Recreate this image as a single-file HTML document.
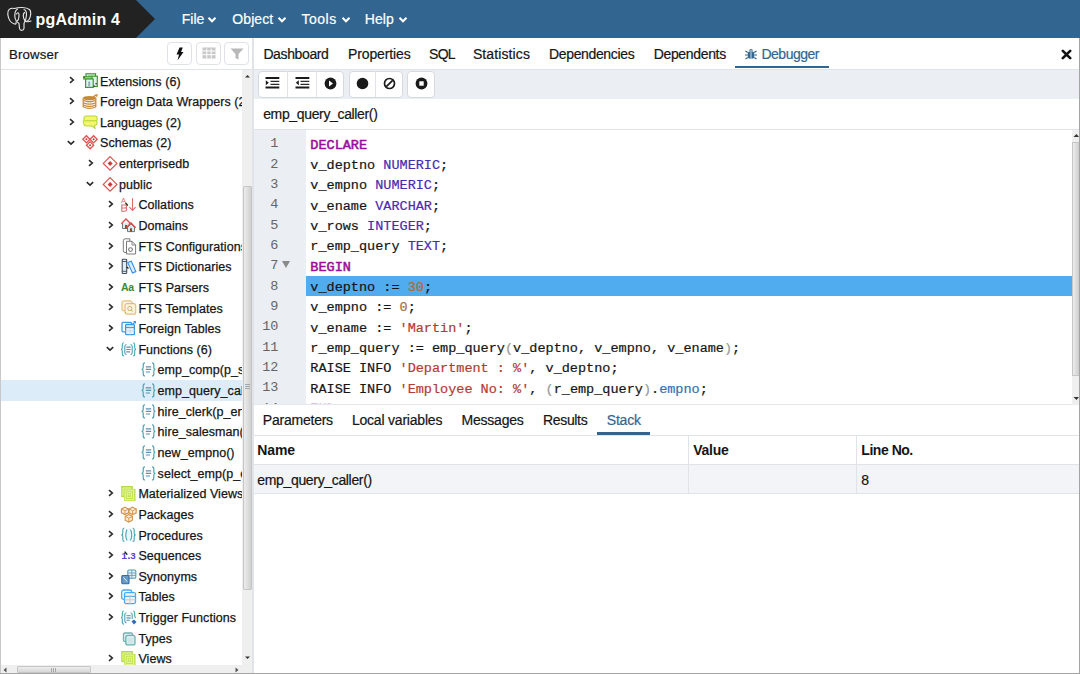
<!DOCTYPE html>
<html><head><meta charset="utf-8">
<style>
*{box-sizing:border-box;margin:0;padding:0}
html,body{width:1080px;height:674px;overflow:hidden;background:#fff;font-family:"Liberation Sans",sans-serif;color:#222;position:relative}
.a{position:absolute;white-space:nowrap}
.t{line-height:normal;-webkit-text-stroke:0.2px currentColor}
.tree{font-size:12.5px;letter-spacing:0.05px;color:#151515;line-height:normal;-webkit-text-stroke:0.25px #151515}
.code{font-family:"Liberation Mono",monospace;font-size:13.52px;color:#151515;line-height:normal;-webkit-text-stroke:0.2px currentColor}
.ln{font-family:"Liberation Mono",monospace;font-size:13.52px;color:#666;text-align:right;width:31px;line-height:normal}
.kw{color:#990f99;-webkit-text-stroke:0.55px #990f99}
.ty{color:#4a2bb0}
.nu{color:#a86c38}
.st{color:#b43a36}
.pa{color:#9a9a9a}
.pr{color:#2f72b8}
.ico{width:15px;height:15px}
</style></head><body>
<!-- navbar -->
<div class="a" style="left:0;top:0;width:1080px;height:38px;background:#326690"></div>
<svg class="a" style="left:0;top:0" width="160" height="38"><polygon points="0,0 136,0 155,19 136,38 0,38" fill="#222"/></svg>

<!-- browser panel -->
<div class="a" style="left:0;top:38px;width:1px;height:636px;background:#c8c8c8"></div>
<div class="a" style="left:1px;top:69px;width:251px;height:1px;background:#e0e3e8"></div>
<div class="a" style="left:167px;top:42.3px;width:25px;height:22.5px;border:1px solid #dfe2e7;border-radius:4px"></div>
<div class="a" style="left:196px;top:42.3px;width:25px;height:22.5px;border:1px solid #dfe2e7;border-radius:4px"></div>
<div class="a" style="left:224px;top:42.3px;width:25px;height:22.5px;border:1px solid #dfe2e7;border-radius:4px"></div>
<!-- selected row -->
<div class="a" style="left:1px;top:380px;width:241px;height:20.7px;background:#dcedf9"></div>
<div class="a" style="left:0;top:70px;width:242px;height:595px;overflow:hidden"><div class="a" style="left:0;top:-70px;width:1080px;height:674px"><svg class="a" style="left:68.0px;top:76.4px" width="8" height="8" viewBox="0 0 8 8"><path d="M2 1.2 L5.3 4 L2 6.8" fill="none" stroke="#2a2a2a" stroke-width="1.6"/></svg>
<svg class="a" style="left:83.0px;top:73.4px;overflow:visible" width="17" height="17" viewBox="0 0 17 17"><g stroke="#3d9a2e" stroke-width="1.2" fill="#def4f4">
<rect x="3" y="0.8" width="9.5" height="3.2"/>
<rect x="5.8" y="3.2" width="8.5" height="10.3"/>
<rect x="0.8" y="3.8" width="8.2" height="2.2"/>
<rect x="2.6" y="6" width="7.6" height="8.4"/></g>
<rect x="5.2" y="8.5" width="2" height="5" fill="#9ab"/>
<rect x="0.5" y="3.5" width="1.3" height="1.3" fill="#333"/><rect x="10.5" y="12.5" width="1.3" height="1.3" fill="#333"/><rect x="12.5" y="10" width="1.3" height="1.3" fill="#333"/></svg>
<div class="a tree" style="left:100.0px;top:74.59px">Extensions (6)</div>
<svg class="a" style="left:68.0px;top:97.0px" width="8" height="8" viewBox="0 0 8 8"><path d="M2 1.2 L5.3 4 L2 6.8" fill="none" stroke="#2a2a2a" stroke-width="1.6"/></svg>
<svg class="a" style="left:83.0px;top:94.0px;overflow:visible" width="17" height="17" viewBox="0 0 17 17"><ellipse cx="6.5" cy="4.1" rx="6.6" ry="2.2" fill="#c8893a"/>
<g fill="none" stroke="#c8893a" stroke-width="1.25">
<path d="M0.2 6.3 Q6.5 9.2 12.8 6.3"/><path d="M0.2 8.7 Q6.5 11.6 12.8 8.7"/><path d="M0.2 11 Q6.5 13.9 12.8 11"/><path d="M0.2 13 Q6.5 15.6 12.8 13"/>
<path d="M0.2 4 L0.2 13 M12.8 4 L12.8 13"/></g>
<path d="M11.5 1 L15 0 L14 3.2Z" fill="#c8893a"/><path d="M10 3 L13 1" stroke="#c8893a" stroke-width="1.3"/></svg>
<div class="a tree" style="left:100.0px;top:95.22px">Foreign Data Wrappers (2)</div>
<svg class="a" style="left:68.0px;top:117.7px" width="8" height="8" viewBox="0 0 8 8"><path d="M2 1.2 L5.3 4 L2 6.8" fill="none" stroke="#2a2a2a" stroke-width="1.6"/></svg>
<svg class="a" style="left:83.0px;top:114.7px;overflow:visible" width="17" height="17" viewBox="0 0 17 17"><path d="M1 3 Q1 1 3.5 1 L12 1 Q14.5 1 14 3.5 Q15 5.5 13.5 6.5 Q15 8.5 13 10 L11.5 10.5 L12 13.5 L9 11 L3.5 11 Q0.5 11 1 8.5 Q-0.5 6.5 1 5.5 Z" fill="#f6f66e" stroke="#b6d63a" stroke-width="1.1"/>
<path d="M1.5 5.8 L13.5 5.8" stroke="#b6d63a" stroke-width="1.1"/></svg>
<div class="a tree" style="left:100.0px;top:115.86px">Languages (2)</div>
<svg class="a" style="left:66.4px;top:138.8px" width="10" height="8" viewBox="0 0 10 8"><path d="M1.8 2.2 L5 5.2 L8.2 2.2" fill="none" stroke="#2a2a2a" stroke-width="1.6"/></svg>
<svg class="a" style="left:83.0px;top:135.3px;overflow:visible" width="17" height="17" viewBox="0 0 17 17"><g fill="none" stroke="#d9534f" stroke-width="1.3">
<path d="M3.4 0.7 L7 4.3 L3.4 7.9 L-0.2 4.3Z"/><path d="M10.6 0.7 L14.2 4.3 L10.6 7.9 L7 4.3Z"/><path d="M7.1 6.6 L10.7 10.2 L7.1 13.8 L3.5 10.2Z"/></g>
<circle cx="3.4" cy="4.3" r="1" fill="#d43030"/><circle cx="10.6" cy="4.3" r="1" fill="#d43030"/><circle cx="7.1" cy="10.2" r="1" fill="#d43030"/></svg>
<div class="a tree" style="left:100.0px;top:136.49px">Schemas (2)</div>
<svg class="a" style="left:87.0px;top:158.9px" width="8" height="8" viewBox="0 0 8 8"><path d="M2 1.2 L5.3 4 L2 6.8" fill="none" stroke="#2a2a2a" stroke-width="1.6"/></svg>
<svg class="a" style="left:102.5px;top:155.9px;overflow:visible" width="17" height="17" viewBox="0 0 17 17"><path d="M7.1 0.6 L13.9 7.4 L7.1 14.2 L0.3 7.4Z" fill="none" stroke="#d9534f" stroke-width="1.2"/>
<path d="M7.1 4.9 L9.6 7.4 L7.1 9.9 L4.6 7.4Z" fill="#d43838"/></svg>
<div class="a tree" style="left:119.1px;top:157.13px">enterprisedb</div>
<svg class="a" style="left:85.4px;top:180.1px" width="10" height="8" viewBox="0 0 10 8"><path d="M1.8 2.2 L5 5.2 L8.2 2.2" fill="none" stroke="#2a2a2a" stroke-width="1.6"/></svg>
<svg class="a" style="left:102.5px;top:176.6px;overflow:visible" width="17" height="17" viewBox="0 0 17 17"><path d="M7.1 0.6 L13.9 7.4 L7.1 14.2 L0.3 7.4Z" fill="none" stroke="#d9534f" stroke-width="1.2"/>
<path d="M7.1 4.9 L9.6 7.4 L7.1 9.9 L4.6 7.4Z" fill="#d43838"/></svg>
<div class="a tree" style="left:119.1px;top:177.76px">public</div>
<svg class="a" style="left:106.7px;top:200.2px" width="8" height="8" viewBox="0 0 8 8"><path d="M2 1.2 L5.3 4 L2 6.8" fill="none" stroke="#2a2a2a" stroke-width="1.6"/></svg>
<svg class="a" style="left:121.0px;top:197.2px;overflow:visible" width="17" height="17" viewBox="0 0 17 17"><text x="0" y="6.3" font-family="Liberation Sans" font-size="7.5" fill="#e06a6a">A</text>
<path d="M0.8 8 L4.2 8 Q5.6 8 5.6 9.5 Q5.6 10.8 4.3 10.9 Q5.8 11 5.8 12.6 Q5.8 14.2 4 14.2 L0.8 14.2Z M0.8 11 L4.2 11" fill="none" stroke="#e06a6a" stroke-width="1.1"/>
<path d="M11.5 1.3 L11.5 13.3 M8.4 10.2 L11.5 13.5 L14.6 10.2" stroke="#e06a6a" stroke-width="1.1" fill="none"/>
<path d="M4.5 6 L6.8 8.5" stroke="#222" stroke-width="1.3"/></svg>
<div class="a tree" style="left:138.4px;top:198.40px">Collations</div>
<svg class="a" style="left:106.7px;top:220.8px" width="8" height="8" viewBox="0 0 8 8"><path d="M2 1.2 L5.3 4 L2 6.8" fill="none" stroke="#2a2a2a" stroke-width="1.6"/></svg>
<svg class="a" style="left:121.0px;top:217.8px;overflow:visible" width="17" height="17" viewBox="0 0 17 17"><path d="M1.5 5.2 L1.5 10.5 L8.5 10.5 L8.5 5.2" fill="#d4ecf8" stroke="#666" stroke-width="0.9"/>
<path d="M0.3 5.8 L5 1 L9.7 5.8" fill="none" stroke="#e04848" stroke-width="1.3"/>
<rect x="4" y="7" width="2" height="3.5" fill="#8a4a1a"/>
<path d="M6.5 9.2 L6.5 13.6 L13.5 13.6 L13.5 9.2 L10 5.8Z" fill="#d4ecf8" stroke="#666" stroke-width="0.9"/>
<path d="M5.3 9.8 L10 5 L14.7 9.8" fill="none" stroke="#e04848" stroke-width="1.3"/>
<rect x="9" y="10.3" width="2" height="3.3" fill="#8a4a1a"/></svg>
<div class="a tree" style="left:138.4px;top:219.03px">Domains</div>
<svg class="a" style="left:106.7px;top:241.5px" width="8" height="8" viewBox="0 0 8 8"><path d="M2 1.2 L5.3 4 L2 6.8" fill="none" stroke="#2a2a2a" stroke-width="1.6"/></svg>
<svg class="a" style="left:121.0px;top:238.5px;overflow:visible" width="17" height="17" viewBox="0 0 17 17"><path d="M4 -0.2 L8.8 -0.2 L8.8 13.5 L4 13.5 Q2.3 13.5 2.3 11.5 L2.3 1.8 Q2.3 -0.2 4 -0.2Z" fill="#fff" stroke="#7a7a7a" stroke-width="1"/>
<path d="M5.5 2.3 L11 2.3 L14.6 6 L14.6 15 L5.5 15Z" fill="#fff" stroke="#7a7a7a" stroke-width="1"/>
<path d="M11 2.3 L11 6 L14.6 6" fill="none" stroke="#7a7a7a" stroke-width="0.9"/>
<circle cx="9.5" cy="10.6" r="1.9" fill="none" stroke="#7a7a7a" stroke-width="1.1"/></svg>
<div class="a tree" style="left:138.4px;top:239.67px">FTS Configurations</div>
<svg class="a" style="left:106.7px;top:262.1px" width="8" height="8" viewBox="0 0 8 8"><path d="M2 1.2 L5.3 4 L2 6.8" fill="none" stroke="#2a2a2a" stroke-width="1.6"/></svg>
<svg class="a" style="left:121.0px;top:259.1px;overflow:visible" width="17" height="17" viewBox="0 0 17 17"><rect x="1.2" y="0.3" width="4.5" height="14.2" rx="0.8" fill="#dcecf8" stroke="#444c5c" stroke-width="1.1"/>
<path d="M1.2 2.5 L5.7 2.5 M1.2 12.3 L5.7 12.3" stroke="#444c5c" stroke-width="0.9"/>
<path d="M6.8 3.6 L10.3 2.2 L14.9 12.6 L11.4 14Z" fill="#d8ecfb" stroke="#3a8ee8" stroke-width="1.1"/>
<path d="M5.8 8 L7.5 9.5" stroke="#222" stroke-width="1.2"/></svg>
<div class="a tree" style="left:138.4px;top:260.30px">FTS Dictionaries</div>
<svg class="a" style="left:106.7px;top:282.8px" width="8" height="8" viewBox="0 0 8 8"><path d="M2 1.2 L5.3 4 L2 6.8" fill="none" stroke="#2a2a2a" stroke-width="1.6"/></svg>
<svg class="a" style="left:121.0px;top:279.8px;overflow:visible" width="17" height="17" viewBox="0 0 17 17"><text x="0" y="10.9" font-family="Liberation Sans" font-size="10.5" font-weight="bold" fill="#3e8a2c" letter-spacing="-0.3">Aa</text></svg>
<div class="a tree" style="left:138.4px;top:280.94px">FTS Parsers</div>
<svg class="a" style="left:106.7px;top:303.4px" width="8" height="8" viewBox="0 0 8 8"><path d="M2 1.2 L5.3 4 L2 6.8" fill="none" stroke="#2a2a2a" stroke-width="1.6"/></svg>
<svg class="a" style="left:121.0px;top:300.4px;overflow:visible" width="17" height="17" viewBox="0 0 17 17"><rect x="1" y="0.8" width="10" height="10" rx="2" fill="#fdf3e0" stroke="#e8bf7e" stroke-width="1.2"/>
<rect x="4" y="3.7" width="10.7" height="10.5" rx="2" fill="#fdf3e0" stroke="#e8bf7e" stroke-width="1.2"/>
<circle cx="8.8" cy="8.5" r="2.1" fill="none" stroke="#d8b070" stroke-width="1"/><path d="M10.3 10 L11.6 11.4" stroke="#8cc83a" stroke-width="1"/>
<circle cx="11.8" cy="3.5" r="0.6" fill="#8cc83a"/><circle cx="4.5" cy="12.5" r="0.6" fill="#8cc83a"/></svg>
<div class="a tree" style="left:138.4px;top:301.57px">FTS Templates</div>
<svg class="a" style="left:106.7px;top:324.0px" width="8" height="8" viewBox="0 0 8 8"><path d="M2 1.2 L5.3 4 L2 6.8" fill="none" stroke="#2a2a2a" stroke-width="1.6"/></svg>
<svg class="a" style="left:121.0px;top:321.0px;overflow:visible" width="17" height="17" viewBox="0 0 17 17"><rect x="1" y="1.3" width="9.5" height="9.5" rx="1" fill="#fff" stroke="#3a9ae8" stroke-width="1.3"/>
<rect x="4.6" y="3.5" width="8.8" height="10.2" rx="1" fill="#eef2f6" stroke="#3a9ae8" stroke-width="1.3"/>
<path d="M4.6 6.5 L13.4 6.5" stroke="#3a9ae8" stroke-width="1.2"/><path d="M4.6 10 L13.4 10 M9 6.5 L9 13.7" stroke="#c8d4de" stroke-width="0.9"/>
<path d="M11.5 3.5 L14.3 0.8" stroke="#3a9ae8" stroke-width="1.2"/><path d="M12 0 L15 0 L15 3Z" fill="#3a9ae8"/></svg>
<div class="a tree" style="left:138.4px;top:322.21px">Foreign Tables</div>
<svg class="a" style="left:105.1px;top:345.2px" width="10" height="8" viewBox="0 0 10 8"><path d="M1.8 2.2 L5 5.2 L8.2 2.2" fill="none" stroke="#2a2a2a" stroke-width="1.6"/></svg>
<svg class="a" style="left:121.0px;top:341.7px;overflow:visible" width="17" height="17" viewBox="0 0 17 17"><g fill="none" stroke="#4aa4b4" stroke-width="1.1">
<path d="M3 0.8 Q1.3 0.8 1.3 2.8 L1.3 5.5 Q1.3 7.4 0 7.4 Q1.3 7.4 1.3 9.3 L1.3 12 Q1.3 14 3 14"/>
<path d="M12 0.8 Q13.7 0.8 13.7 2.8 L13.7 5.5 Q13.7 7.4 15 7.4 Q13.7 7.4 13.7 9.3 L13.7 12 Q13.7 14 12 14"/>
<path d="M5.5 2.5 Q3.8 2.5 3.8 4.5 L3.8 10.5 Q3.8 12.5 5.5 12.5 M9.5 2.5 Q11.2 2.5 11.2 4.5 L11.2 10.5 Q11.2 12.5 9.5 12.5"/></g>
<path d="M5.3 5.2 L9.7 5.2 M5.3 7.5 L9.7 7.5 M5.3 9.9 L9 9.9" stroke="#5e8fae" stroke-width="1.2"/></svg>
<div class="a tree" style="left:138.4px;top:342.84px">Functions (6)</div>
<svg class="a" style="left:141.0px;top:362.3px;overflow:visible" width="17" height="17" viewBox="0 0 17 17"><g fill="none" stroke="#4aa4b4" stroke-width="1.2">
<path d="M4 0.8 Q2.2 0.8 2.2 2.8 L2.2 5.5 Q2.2 7.4 0.6 7.4 Q2.2 7.4 2.2 9.3 L2.2 12 Q2.2 14 4 14"/>
<path d="M11 0.8 Q12.8 0.8 12.8 2.8 L12.8 5.5 Q12.8 7.4 14.4 7.4 Q12.8 7.4 12.8 9.3 L12.8 12 Q12.8 14 11 14"/></g>
<path d="M4.8 4.8 L10.2 4.8 M4.8 7.4 L10.2 7.4 M4.8 10 L9 10" stroke="#5e8fae" stroke-width="1.2"/></svg>
<div class="a tree" style="left:157.6px;top:363.48px">emp_comp(p_sal NUMERIC)</div>
<svg class="a" style="left:141.0px;top:382.9px;overflow:visible" width="17" height="17" viewBox="0 0 17 17"><g fill="none" stroke="#4aa4b4" stroke-width="1.2">
<path d="M4 0.8 Q2.2 0.8 2.2 2.8 L2.2 5.5 Q2.2 7.4 0.6 7.4 Q2.2 7.4 2.2 9.3 L2.2 12 Q2.2 14 4 14"/>
<path d="M11 0.8 Q12.8 0.8 12.8 2.8 L12.8 5.5 Q12.8 7.4 14.4 7.4 Q12.8 7.4 12.8 9.3 L12.8 12 Q12.8 14 11 14"/></g>
<path d="M4.8 4.8 L10.2 4.8 M4.8 7.4 L10.2 7.4 M4.8 10 L9 10" stroke="#5e8fae" stroke-width="1.2"/></svg>
<div class="a tree" style="left:157.6px;top:384.11px">emp_query_caller()</div>
<svg class="a" style="left:141.0px;top:403.6px;overflow:visible" width="17" height="17" viewBox="0 0 17 17"><g fill="none" stroke="#4aa4b4" stroke-width="1.2">
<path d="M4 0.8 Q2.2 0.8 2.2 2.8 L2.2 5.5 Q2.2 7.4 0.6 7.4 Q2.2 7.4 2.2 9.3 L2.2 12 Q2.2 14 4 14"/>
<path d="M11 0.8 Q12.8 0.8 12.8 2.8 L12.8 5.5 Q12.8 7.4 14.4 7.4 Q12.8 7.4 12.8 9.3 L12.8 12 Q12.8 14 11 14"/></g>
<path d="M4.8 4.8 L10.2 4.8 M4.8 7.4 L10.2 7.4 M4.8 10 L9 10" stroke="#5e8fae" stroke-width="1.2"/></svg>
<div class="a tree" style="left:157.6px;top:404.75px">hire_clerk(p_ename VARCHAR)</div>
<svg class="a" style="left:141.0px;top:424.2px;overflow:visible" width="17" height="17" viewBox="0 0 17 17"><g fill="none" stroke="#4aa4b4" stroke-width="1.2">
<path d="M4 0.8 Q2.2 0.8 2.2 2.8 L2.2 5.5 Q2.2 7.4 0.6 7.4 Q2.2 7.4 2.2 9.3 L2.2 12 Q2.2 14 4 14"/>
<path d="M11 0.8 Q12.8 0.8 12.8 2.8 L12.8 5.5 Q12.8 7.4 14.4 7.4 Q12.8 7.4 12.8 9.3 L12.8 12 Q12.8 14 11 14"/></g>
<path d="M4.8 4.8 L10.2 4.8 M4.8 7.4 L10.2 7.4 M4.8 10 L9 10" stroke="#5e8fae" stroke-width="1.2"/></svg>
<div class="a tree" style="left:157.6px;top:425.38px">hire_salesman(p_ename VARCHAR)</div>
<svg class="a" style="left:141.0px;top:444.8px;overflow:visible" width="17" height="17" viewBox="0 0 17 17"><g fill="none" stroke="#4aa4b4" stroke-width="1.2">
<path d="M4 0.8 Q2.2 0.8 2.2 2.8 L2.2 5.5 Q2.2 7.4 0.6 7.4 Q2.2 7.4 2.2 9.3 L2.2 12 Q2.2 14 4 14"/>
<path d="M11 0.8 Q12.8 0.8 12.8 2.8 L12.8 5.5 Q12.8 7.4 14.4 7.4 Q12.8 7.4 12.8 9.3 L12.8 12 Q12.8 14 11 14"/></g>
<path d="M4.8 4.8 L10.2 4.8 M4.8 7.4 L10.2 7.4 M4.8 10 L9 10" stroke="#5e8fae" stroke-width="1.2"/></svg>
<div class="a tree" style="left:157.6px;top:446.02px">new_empno()</div>
<svg class="a" style="left:141.0px;top:465.5px;overflow:visible" width="17" height="17" viewBox="0 0 17 17"><g fill="none" stroke="#4aa4b4" stroke-width="1.2">
<path d="M4 0.8 Q2.2 0.8 2.2 2.8 L2.2 5.5 Q2.2 7.4 0.6 7.4 Q2.2 7.4 2.2 9.3 L2.2 12 Q2.2 14 4 14"/>
<path d="M11 0.8 Q12.8 0.8 12.8 2.8 L12.8 5.5 Q12.8 7.4 14.4 7.4 Q12.8 7.4 12.8 9.3 L12.8 12 Q12.8 14 11 14"/></g>
<path d="M4.8 4.8 L10.2 4.8 M4.8 7.4 L10.2 7.4 M4.8 10 L9 10" stroke="#5e8fae" stroke-width="1.2"/></svg>
<div class="a tree" style="left:157.6px;top:466.65px">select_emp(p_empno NUMERIC)</div>
<svg class="a" style="left:106.7px;top:489.1px" width="8" height="8" viewBox="0 0 8 8"><path d="M2 1.2 L5.3 4 L2 6.8" fill="none" stroke="#2a2a2a" stroke-width="1.6"/></svg>
<svg class="a" style="left:121.0px;top:486.1px;overflow:visible" width="17" height="17" viewBox="0 0 17 17"><rect x="0.8" y="0.6" width="10.5" height="10" fill="#c4e458" stroke="#b0d640" stroke-width="1"/>
<rect x="3" y="2.8" width="11.6" height="12.2" fill="#c4e458"/>
<g fill="none" stroke="#eefaa8" stroke-width="0.8"><path d="M2 2 L10.3 2 M2 2 L2 9.5"/><path d="M4.3 4.2 L12.5 4.2 L12.5 13.6 L4.3 13.6Z"/><path d="M6.3 6.3 L10.5 6.3 L10.5 11.5 L6.3 11.5Z"/></g>
<rect x="7.8" y="7.8" width="1.3" height="1.5" fill="#eefaa8"/></svg>
<div class="a tree" style="left:138.4px;top:487.29px">Materialized Views</div>
<svg class="a" style="left:106.7px;top:509.7px" width="8" height="8" viewBox="0 0 8 8"><path d="M2 1.2 L5.3 4 L2 6.8" fill="none" stroke="#2a2a2a" stroke-width="1.6"/></svg>
<svg class="a" style="left:121.0px;top:506.7px;overflow:visible" width="17" height="17" viewBox="0 0 17 17"><g fill="#fbeedc" stroke="#cf9450" stroke-width="1.15">
<path d="M4 0.2 L7.6 2 L7.6 5.8 L4 7.6 L0.4 5.8 L0.4 2Z"/><path d="M11.6 0.2 L15.2 2 L15.2 5.8 L11.6 7.6 L8 5.8 L8 2Z"/><path d="M7.8 7.6 L11.4 9.4 L11.4 13.2 L7.8 15 L4.2 13.2 L4.2 9.4Z"/></g>
<path d="M0.4 2 L4 3.8 L7.6 2 M4 3.8 L4 7.6 M8 2 L11.6 3.8 L15.2 2 M11.6 3.8 L11.6 7.6 M4.2 9.4 L7.8 11.2 L11.4 9.4 M7.8 11.2 L7.8 15" fill="none" stroke="#cf9450" stroke-width="0.9"/></svg>
<div class="a tree" style="left:138.4px;top:507.92px">Packages</div>
<svg class="a" style="left:106.7px;top:530.4px" width="8" height="8" viewBox="0 0 8 8"><path d="M2 1.2 L5.3 4 L2 6.8" fill="none" stroke="#2a2a2a" stroke-width="1.6"/></svg>
<svg class="a" style="left:121.0px;top:527.4px;overflow:visible" width="17" height="17" viewBox="0 0 17 17"><g fill="none" stroke="#4aa4b4" stroke-width="1.15">
<path d="M3.5 1 Q1.8 1 1.8 3 L1.8 6 Q1.8 7.8 0.3 7.8 Q1.8 7.8 1.8 9.6 L1.8 12.5 Q1.8 14.5 3.5 14.5"/>
<path d="M11.5 1 Q13.2 1 13.2 3 L13.2 6 Q13.2 7.8 14.7 7.8 Q13.2 7.8 13.2 9.6 L13.2 12.5 Q13.2 14.5 11.5 14.5"/></g>
<path d="M6 2.5 Q3.5 7.8 6 13.5 L9.5 13.5 Q12 7.8 9.5 2.5Z" fill="#e4fafd"/>
<path d="M6 2.5 Q3.5 7.8 6 13.5 M9.5 2.5 Q12 7.8 9.5 13.5" fill="none" stroke="#4aa4b4" stroke-width="1.1"/></svg>
<div class="a tree" style="left:138.4px;top:528.56px">Procedures</div>
<svg class="a" style="left:106.7px;top:551.0px" width="8" height="8" viewBox="0 0 8 8"><path d="M2 1.2 L5.3 4 L2 6.8" fill="none" stroke="#2a2a2a" stroke-width="1.6"/></svg>
<svg class="a" style="left:121.0px;top:548.0px;overflow:visible" width="17" height="17" viewBox="0 0 17 17"><text x="0.5" y="11" font-family="Liberation Sans" font-size="9.8" font-weight="bold" fill="#5a3ad0">1</text>
<circle cx="8" cy="10.2" r="0.9" fill="#5a3ad0"/>
<text x="9.2" y="11" font-family="Liberation Sans" font-size="9.8" font-weight="bold" fill="#5a3ad0">3</text>
<path d="M3.6 3.6 L6.3 6.6" stroke="#111" stroke-width="1.4"/></svg>
<div class="a tree" style="left:138.4px;top:549.19px">Sequences</div>
<svg class="a" style="left:106.7px;top:571.6px" width="8" height="8" viewBox="0 0 8 8"><path d="M2 1.2 L5.3 4 L2 6.8" fill="none" stroke="#2a2a2a" stroke-width="1.6"/></svg>
<svg class="a" style="left:121.0px;top:568.6px;overflow:visible" width="17" height="17" viewBox="0 0 17 17"><rect x="6.8" y="1" width="8" height="8.3" rx="1" fill="#e2f2f4" stroke="#5a9ab8" stroke-width="1.1"/>
<path d="M6.8 4 L14.8 4 M10.8 1 L10.8 9.3 M6.8 6.5 L14.8 6.5" stroke="#5a9ab8" stroke-width="0.8"/>
<rect x="0.8" y="6.5" width="7.2" height="8.2" rx="1" fill="#6a9ac8" stroke="#3a6a9a" stroke-width="1.1"/>
<path d="M2.5 8.5 L6 12.5" stroke="#d8eef8" stroke-width="1"/></svg>
<div class="a tree" style="left:138.4px;top:569.83px">Synonyms</div>
<svg class="a" style="left:106.7px;top:592.3px" width="8" height="8" viewBox="0 0 8 8"><path d="M2 1.2 L5.3 4 L2 6.8" fill="none" stroke="#2a2a2a" stroke-width="1.6"/></svg>
<svg class="a" style="left:121.0px;top:589.3px;overflow:visible" width="17" height="17" viewBox="0 0 17 17"><rect x="0.7" y="1" width="10" height="9.5" rx="2" fill="#fff" stroke="#4aa8f0" stroke-width="1.3"/>
<rect x="3.5" y="3.6" width="11" height="11" rx="1.5" fill="#f2f2f2" stroke="#4aa8f0" stroke-width="1.3"/>
<path d="M3.5 7.3 L14.5 7.3" stroke="#4aa8f0" stroke-width="1.2"/><path d="M3.5 10.8 L14.5 10.8 M9 7.3 L9 14.6" stroke="#c8ccd0" stroke-width="1"/>
<rect x="4.5" y="4.5" width="3.5" height="2" fill="#f2f0dc"/><rect x="10" y="4.5" width="3.5" height="2" fill="#f2f0dc"/></svg>
<div class="a tree" style="left:138.4px;top:590.46px">Tables</div>
<svg class="a" style="left:106.7px;top:612.9px" width="8" height="8" viewBox="0 0 8 8"><path d="M2 1.2 L5.3 4 L2 6.8" fill="none" stroke="#2a2a2a" stroke-width="1.6"/></svg>
<svg class="a" style="left:121.0px;top:609.9px;overflow:visible" width="17" height="17" viewBox="0 0 17 17"><g fill="none" stroke="#4aa4b4" stroke-width="1.1">
<path d="M3 1 Q1.3 1 1.3 3 L1.3 5.8 Q1.3 7.6 0 7.6 Q1.3 7.6 1.3 9.4 L1.3 12.2 Q1.3 14.2 3 14.2"/>
<path d="M12 1 Q13.7 1 13.7 3 L13.7 5.8 Q13.7 7.6 15 7.6"/>
<path d="M5.5 2.7 Q3.8 2.7 3.8 4.7 L3.8 10.7 Q3.8 12.7 5.5 12.7 M9.5 2.7 Q11.2 2.7 11.2 4.7 L11.2 9"/></g>
<path d="M5.5 5.6 L9.7 5.6 M5.5 8 L9.7 8 M5.5 10.4 L8.8 10.4" stroke="#6aaab8" stroke-width="1.4"/>
<path d="M10.5 11.5 L13 9.5 L15.5 12 L13 14.5Z" fill="#2a6ac0"/></svg>
<div class="a tree" style="left:138.4px;top:611.10px">Trigger Functions</div>
<svg class="a" style="left:121.0px;top:630.5px;overflow:visible" width="17" height="17" viewBox="0 0 17 17"><rect x="2.5" y="2" width="9" height="8.5" rx="1.5" fill="#e6f4f4" stroke="#6ab4b0" stroke-width="1.3"/>
<rect x="4.8" y="4.3" width="9.2" height="9.6" rx="2" fill="#d6ecee" stroke="#6ab4b0" stroke-width="1.3"/>
<rect x="7" y="7" width="5" height="5" fill="#cfe6e8"/></svg>
<div class="a tree" style="left:138.4px;top:631.73px">Types</div>
<svg class="a" style="left:106.7px;top:654.2px" width="8" height="8" viewBox="0 0 8 8"><path d="M2 1.2 L5.3 4 L2 6.8" fill="none" stroke="#2a2a2a" stroke-width="1.6"/></svg>
<svg class="a" style="left:121.0px;top:651.2px;overflow:visible" width="17" height="17" viewBox="0 0 17 17"><rect x="0.8" y="0.6" width="10.5" height="10" fill="#c4e458" stroke="#b0d640" stroke-width="1"/>
<rect x="3" y="2.8" width="11.6" height="12.2" fill="#c4e458"/>
<g fill="none" stroke="#eefaa8" stroke-width="0.8"><path d="M2 2 L10.3 2 M2 2 L2 9.5"/><path d="M4.3 4.2 L12.5 4.2 L12.5 13.6 L4.3 13.6Z"/><path d="M6.3 6.3 L10.5 6.3 L10.5 11.5 L6.3 11.5Z"/></g>
<rect x="7.8" y="7.8" width="1.3" height="1.5" fill="#eefaa8"/></svg>
<div class="a tree" style="left:138.4px;top:652.37px">Views</div></div></div>
<!-- clip cover for tree overflow -->
<div class="a" style="left:242px;top:70px;width:10px;height:604px;background:#efefef"></div>
<div class="a" style="left:242.5px;top:186px;width:9px;height:404px;background:linear-gradient(90deg,#ececec,#dcdcdc 60%,#cfcfcf);border:1px solid #c6c6c6;border-radius:1px"></div>
<div class="a" style="left:1px;top:665px;width:241px;height:9px;background:#efefef"></div>
<div class="a" style="left:17px;top:666px;width:73.5px;height:6.5px;background:linear-gradient(180deg,#ececec,#d8d8d8);border:1px solid #c6c6c6;border-radius:1px"></div>
<svg class="a" style="left:50px;top:666.5px" width="8" height="6" viewBox="0 0 8 6"><path d="M1.5 1 L1.5 5 M3.5 1 L3.5 5 M5.5 1 L5.5 5" stroke="#999" stroke-width="0.8"/></svg>
<svg class="a" style="left:2px;top:666px" width="6" height="8" viewBox="0 0 6 8"><path d="M4.5 1.5 L1.5 4 L4.5 6.5Z" fill="#555"/></svg>
<svg class="a" style="left:233.5px;top:666px" width="6" height="8" viewBox="0 0 6 8"><path d="M1.5 1.5 L4.5 4 L1.5 6.5Z" fill="#555"/></svg>

<!-- splitter -->
<div class="a" style="left:252px;top:38px;width:1.5px;height:636px;background:#e0e3e8"></div>

<!-- right tabs -->
<div class="a" style="left:253.5px;top:69px;width:826.5px;height:1px;background:#e0e3e8"></div>
<div class="a" style="left:735px;top:65.7px;width:94px;height:2.6px;background:#326690"></div>

<!-- toolbar -->
<div class="a" style="left:253.5px;top:70px;width:826.5px;height:29px;background:#ebeef3"></div>
<div class="a" style="left:258.3px;top:70.5px;width:86px;height:27px;background:#fff;border:1px solid #d6dae0;border-radius:4px"></div>
<div class="a" style="left:287px;top:71px;width:1px;height:26px;background:#e0e3e8"></div>
<div class="a" style="left:316px;top:71px;width:1px;height:26px;background:#e0e3e8"></div>
<div class="a" style="left:348.5px;top:70.5px;width:54.5px;height:27px;background:#fff;border:1px solid #d6dae0;border-radius:4px"></div>
<div class="a" style="left:375px;top:71px;width:1px;height:26px;background:#e0e3e8"></div>
<div class="a" style="left:407px;top:70.5px;width:27.5px;height:27px;background:#fff;border:1px solid #d6dae0;border-radius:4px"></div>

<!-- title border -->
<div class="a" style="left:253.5px;top:128.5px;width:826.5px;height:1px;background:#e0e3e8"></div>

<!-- code -->
<div class="a" style="left:253.5px;top:129.5px;width:52.5px;height:275px;background:#ebeef3"></div>
<div class="a" style="left:306px;top:276px;width:766px;height:20px;background:#50acee"></div>
<div class="a code" style="left:310.3px;top:137.69px"><span class="kw">DECLARE</span></div>
<div class="a ln" style="left:247.4px;top:136.49px">1</div>
<div class="a code" style="left:310.3px;top:158.01px">v_deptno <span class="ty">NUMERIC</span>;</div>
<div class="a ln" style="left:247.4px;top:156.81px">2</div>
<div class="a code" style="left:310.3px;top:178.33px">v_empno <span class="ty">NUMERIC</span>;</div>
<div class="a ln" style="left:247.4px;top:177.13px">3</div>
<div class="a code" style="left:310.3px;top:198.65px">v_ename <span class="ty">VARCHAR</span>;</div>
<div class="a ln" style="left:247.4px;top:197.45px">4</div>
<div class="a code" style="left:310.3px;top:218.97px">v_rows <span class="ty">INTEGER</span>;</div>
<div class="a ln" style="left:247.4px;top:217.77px">5</div>
<div class="a code" style="left:310.3px;top:239.29px">r_emp_query <span class="ty">TEXT</span>;</div>
<div class="a ln" style="left:247.4px;top:238.09px">6</div>
<div class="a code" style="left:310.3px;top:259.61px"><span class="kw">BEGIN</span></div>
<div class="a ln" style="left:247.4px;top:258.41px">7</div>
<div class="a code" style="left:310.3px;top:279.93px">v_deptno := <span class="nu">30</span>;</div>
<div class="a ln" style="left:247.4px;top:278.73px">8</div>
<div class="a code" style="left:310.3px;top:300.25px">v_empno := <span class="nu">0</span>;</div>
<div class="a ln" style="left:247.4px;top:299.05px">9</div>
<div class="a code" style="left:310.3px;top:320.57px">v_ename := <span class="st">'Martin'</span>;</div>
<div class="a ln" style="left:247.4px;top:319.37px">10</div>
<div class="a code" style="left:310.3px;top:340.89px">r_emp_query := emp_query<span class="pa">(</span>v_deptno, v_empno, v_ename<span class="pa">)</span>;</div>
<div class="a ln" style="left:247.4px;top:339.69px">11</div>
<div class="a code" style="left:310.3px;top:361.21px">RAISE INFO <span class="st">'Department : %'</span>, v_deptno;</div>
<div class="a ln" style="left:247.4px;top:360.01px">12</div>
<div class="a code" style="left:310.3px;top:381.53px">RAISE INFO <span class="st">'Employee No: %'</span>, <span class="pa">(</span>r_emp_query<span class="pa">)</span>.<span class="pr">empno</span>;</div>
<div class="a ln" style="left:247.4px;top:380.33px">13</div>
<div class="a code" style="left:310.3px;top:401.85px"><span class="kw">END</span></div>
<div class="a ln" style="left:247.4px;top:400.65px">14</div>
<!-- code clip bottom / bottom panel -->
<div class="a" style="left:253.5px;top:404.3px;width:826.5px;height:270px;background:#fff"></div>
<div class="a" style="left:253.5px;top:404px;width:826.5px;height:1px;background:#e4e7ec"></div>
<div class="a" style="left:253.5px;top:435px;width:826.5px;height:1px;background:#e0e3e8"></div>
<div class="a" style="left:597px;top:432.3px;width:53px;height:2.7px;background:#326690"></div>
<div class="a" style="left:253.5px;top:464.3px;width:826.5px;height:1px;background:#e0e3e8"></div>
<div class="a" style="left:253.5px;top:465.3px;width:826.5px;height:27.5px;background:#f3f4f7"></div>
<div class="a" style="left:253.5px;top:492.5px;width:826.5px;height:1px;background:#e0e3e8"></div>
<div class="a" style="left:688px;top:436px;width:1px;height:57px;background:#e0e3e8"></div>
<div class="a" style="left:856px;top:436px;width:1px;height:57px;background:#e0e3e8"></div>

<!-- code scrollbar -->
<div class="a" style="left:1071.5px;top:129.5px;width:7.5px;height:275px;background:#efefef"></div>
<div class="a" style="left:1071.5px;top:141.5px;width:7.5px;height:234px;background:linear-gradient(90deg,#ececec,#dadada 60%,#cdcdcd);border:1px solid #c6c6c6;border-right:none"></div>
<svg class="a" style="left:1072px;top:132px" width="7" height="7" viewBox="0 0 7 7"><path d="M1.5 5 L4.5 2 L7 5Z" fill="#333"/></svg>
<svg class="a" style="left:1072px;top:395px" width="7" height="7" viewBox="0 0 7 7"><path d="M1.5 2 L4.5 5 L7 2Z" fill="#333"/></svg>
<!-- right border -->
<div class="a" style="left:1078.5px;top:38px;width:1.5px;height:636px;background:#a4a4a4"></div>

<!-- menu carets -->
<svg class="a" style="left:207px;top:16px" width="10" height="8" viewBox="0 0 10 8"><path d="M1.5 1.8 L5 5.3 L8.5 1.8" fill="none" stroke="#fff" stroke-width="2"/></svg>
<svg class="a" style="left:276.5px;top:16px" width="10" height="8" viewBox="0 0 10 8"><path d="M1.5 1.8 L5 5.3 L8.5 1.8" fill="none" stroke="#fff" stroke-width="2"/></svg>
<svg class="a" style="left:340.5px;top:16px" width="10" height="8" viewBox="0 0 10 8"><path d="M1.5 1.8 L5 5.3 L8.5 1.8" fill="none" stroke="#fff" stroke-width="2"/></svg>
<svg class="a" style="left:397.5px;top:16px" width="10" height="8" viewBox="0 0 10 8"><path d="M1.5 1.8 L5 5.3 L8.5 1.8" fill="none" stroke="#fff" stroke-width="2"/></svg>
<!-- elephant logo -->
<svg class="a" style="left:0;top:0" width="40" height="38" viewBox="0 0 40 38">
<g fill="none" stroke="#e6e6e6" stroke-width="1.15" stroke-linejoin="round" stroke-linecap="round">
<path d="M14.5 8.5 C10 7.5 7.2 10 7.8 14.5 C8.4 19 11 23 14.5 24 C16 24.3 16.5 23.5 16 22"/>
<path d="M14.5 8.5 C19 7 26 7 29.5 9.5 C31.5 11.5 31 16 29 19.5 C28 21 27 21.5 26 21.5"/>
<path d="M17.5 9 C15 10.5 14.5 14 15 18 C15.5 21 17.5 22.5 19 23.5 L19.5 28.5 C20 31 23.5 31 24 28.5 L24 23.5 C25 21.5 26.5 18 26.5 14.5 C26.5 11.5 25.5 10 24 9.5"/>
<path d="M16.5 14 C17.5 12 19 12.5 19 15 C19 18 18 20.5 17 21"/>
<path d="M24.5 12.5 C23 14 23 17 24.5 20 L26 21.5 C28 22 30 21.5 31 21"/>
</g></svg>
<!-- browser header icons -->
<svg class="a" style="left:173px;top:46px" width="14" height="15" viewBox="0 0 14 15"><path d="M6.5 1.5 L9.8 1.5 L8 6 L10.5 6 L4.5 14.5 L6 8.5 L3.5 8.5Z" fill="#111"/></svg>
<svg class="a" style="left:202px;top:47px" width="14" height="12" viewBox="0 0 14 12"><rect x="0.5" y="0.5" width="13" height="11" fill="#c8c8c8"/><path d="M0.5 4 L13.5 4 M0.5 7.7 L13.5 7.7 M4.8 1.5 L4.8 11.5 M9.2 1.5 L9.2 11.5" stroke="#fff" stroke-width="1"/></svg>
<svg class="a" style="left:230px;top:48px" width="14" height="12" viewBox="0 0 14 12"><path d="M0.5 0.5 L13.5 0.5 L8.5 6 L8.5 11.5 L5.5 10 L5.5 6Z" fill="#b8b8b8"/></svg>
<!-- tree scrollbar arrows -->
<svg class="a" style="left:243px;top:72px" width="9" height="8" viewBox="0 0 9 8"><path d="M2 5.5 L4.5 3 L7 5.5Z" fill="#333"/></svg>
<svg class="a" style="left:243px;top:654px" width="9" height="8" viewBox="0 0 9 8"><path d="M2 2.5 L4.5 5 L7 2.5Z" fill="#333"/></svg>
<svg class="a" style="left:243px;top:382px" width="9" height="10" viewBox="0 0 9 10"><path d="M2 2.5 L7 2.5 M2 4.5 L7 4.5 M2 6.5 L7 6.5" stroke="#999" stroke-width="0.8"/></svg>
<!-- tab close -->
<svg class="a" style="left:1061px;top:49px" width="11" height="11" viewBox="0 0 11 11"><path d="M1.8 1.8 L9.2 9.2 M9.2 1.8 L1.8 9.2" stroke="#111" stroke-width="2.6" stroke-linecap="round"/></svg>
<!-- bug icon -->
<svg class="a" style="left:745px;top:47px" width="12" height="13" viewBox="0 0 12 13"><g fill="#326690">
<path d="M3.5 3.5 Q6 0.5 8.5 3.5Z"/><rect x="2.8" y="4.2" width="6.4" height="7.6" rx="2.5"/>
</g><path d="M6 4.5 L6 12" stroke="#fff" stroke-width="0.8"/>
<path d="M0.5 4 L2.8 5.5 M11.5 4 L9.2 5.5 M0 8 L2.8 8 M12 8 L9.2 8 M0.5 12 L2.8 10.5 M11.5 12 L9.2 10.5" stroke="#326690" stroke-width="1.2"/></svg>
<!-- toolbar icons -->
<svg class="a" style="left:265px;top:77px" width="15" height="12" viewBox="0 0 15 12"><path d="M0.5 1 L14.3 1 M0.5 10.5 L14.3 10.5" stroke="#1a1a1a" stroke-width="1.9"/><path d="M5.5 4.3 L14.3 4.3 M5.5 7.3 L14.3 7.3" stroke="#2a2a2a" stroke-width="1.3"/><path d="M0.8 3.3 L3.8 5.8 L0.8 8.3Z" fill="#1a1a1a"/></svg>
<svg class="a" style="left:294.5px;top:77px" width="15" height="12" viewBox="0 0 15 12"><path d="M0.5 1 L14.3 1 M0.5 10.5 L14.3 10.5" stroke="#1a1a1a" stroke-width="1.9"/><path d="M5.5 4.3 L14.3 4.3 M5.5 7.3 L14.3 7.3" stroke="#2a2a2a" stroke-width="1.3"/><path d="M3.8 3.3 L0.8 5.8 L3.8 8.3Z" fill="#1a1a1a"/></svg>
<svg class="a" style="left:323.5px;top:76.5px" width="13" height="13" viewBox="0 0 13 13"><circle cx="6.5" cy="6.5" r="5.9" fill="#1a1a1a"/><path d="M5 3.6 L9 6.5 L5 9.4Z" fill="#fff"/></svg>
<svg class="a" style="left:355.5px;top:77px" width="13" height="13" viewBox="0 0 13 13"><circle cx="6.5" cy="6.5" r="5.8" fill="#1a1a1a"/></svg>
<svg class="a" style="left:382.5px;top:77px" width="13" height="13" viewBox="0 0 13 13"><circle cx="6.5" cy="6.5" r="5" fill="none" stroke="#1a1a1a" stroke-width="1.7"/><path d="M3.3 9.7 L9.7 3.3" stroke="#1a1a1a" stroke-width="1.7"/></svg>
<svg class="a" style="left:414.5px;top:77px" width="13" height="13" viewBox="0 0 13 13"><circle cx="6.5" cy="6.5" r="5.9" fill="#1a1a1a"/><rect x="4.3" y="4.3" width="4.4" height="4.4" fill="#fff"/></svg>
<!-- fold marker -->
<svg class="a" style="left:281px;top:260px" width="10" height="9" viewBox="0 0 10 9"><path d="M1 1 L9 1 L5 8Z" fill="#8a8a8a"/></svg>
<div class="a" style="left:0;top:672.6px;width:1080px;height:1.4px;background:#a4a4a4"></div>
<div class="a t" style="left:35.50px;top:11.42px;font-size:16px;font-weight:bold;color:#fff;letter-spacing:0.226px;-webkit-text-stroke:0">pgAdmin 4</div>
<div class="a t" style="left:181.70px;top:11.33px;font-size:14px;font-weight:normal;color:#fff;letter-spacing:0.035px;">File</div>
<div class="a t" style="left:232.30px;top:11.33px;font-size:14px;font-weight:normal;color:#fff;letter-spacing:0.090px;">Object</div>
<div class="a t" style="left:301.50px;top:11.33px;font-size:14px;font-weight:normal;color:#fff;letter-spacing:0.503px;">Tools</div>
<div class="a t" style="left:364.80px;top:11.33px;font-size:14px;font-weight:normal;color:#fff;letter-spacing:0.077px;">Help</div>
<div class="a t" style="left:9.10px;top:46.55px;font-size:13.2px;font-weight:normal;color:#151515;letter-spacing:0.162px;">Browser</div>
<div class="a t" style="left:263.40px;top:45.93px;font-size:14px;font-weight:normal;color:#151515;letter-spacing:-0.377px;">Dashboard</div>
<div class="a t" style="left:348.00px;top:45.93px;font-size:14px;font-weight:normal;color:#151515;letter-spacing:-0.121px;">Properties</div>
<div class="a t" style="left:429.10px;top:45.93px;font-size:14px;font-weight:normal;color:#151515;letter-spacing:-0.805px;">SQL</div>
<div class="a t" style="left:472.90px;top:45.93px;font-size:14px;font-weight:normal;color:#151515;letter-spacing:0.109px;">Statistics</div>
<div class="a t" style="left:549.00px;top:45.93px;font-size:14px;font-weight:normal;color:#151515;letter-spacing:-0.351px;">Dependencies</div>
<div class="a t" style="left:653.70px;top:45.93px;font-size:14px;font-weight:normal;color:#151515;letter-spacing:-0.340px;">Dependents</div>
<div class="a t" style="left:761.50px;top:45.93px;font-size:14px;font-weight:normal;color:#326690;letter-spacing:-0.511px;">Debugger</div>
<div class="a t" style="left:263.20px;top:105.93px;font-size:14px;font-weight:normal;color:#151515;letter-spacing:-0.350px;">emp_query_caller()</div>
<div class="a t" style="left:262.80px;top:412.33px;font-size:14px;font-weight:normal;color:#151515;letter-spacing:-0.226px;">Parameters</div>
<div class="a t" style="left:351.90px;top:412.33px;font-size:14px;font-weight:normal;color:#151515;letter-spacing:-0.206px;">Local variables</div>
<div class="a t" style="left:461.60px;top:412.33px;font-size:14px;font-weight:normal;color:#151515;letter-spacing:-0.238px;">Messages</div>
<div class="a t" style="left:543.00px;top:412.33px;font-size:14px;font-weight:normal;color:#151515;letter-spacing:-0.340px;">Results</div>
<div class="a t" style="left:606.80px;top:412.33px;font-size:14px;font-weight:normal;color:#326690;letter-spacing:-0.203px;">Stack</div>
<div class="a t" style="left:257.30px;top:441.93px;font-size:14px;font-weight:bold;color:#151515;letter-spacing:-0.133px;-webkit-text-stroke:0;">Name</div>
<div class="a t" style="left:693.20px;top:441.93px;font-size:14px;font-weight:bold;color:#151515;letter-spacing:-0.236px;-webkit-text-stroke:0;">Value</div>
<div class="a t" style="left:861.30px;top:441.93px;font-size:14px;font-weight:bold;color:#151515;letter-spacing:-0.465px;-webkit-text-stroke:0;">Line No.</div>
<div class="a t" style="left:257.30px;top:471.63px;font-size:14px;font-weight:normal;color:#151515;letter-spacing:-0.339px;">emp_query_caller()</div>
<div class="a t" style="left:861.30px;top:471.63px;font-size:14px;font-weight:normal;color:#151515;letter-spacing:-0.086px;">8</div>
</body></html>
